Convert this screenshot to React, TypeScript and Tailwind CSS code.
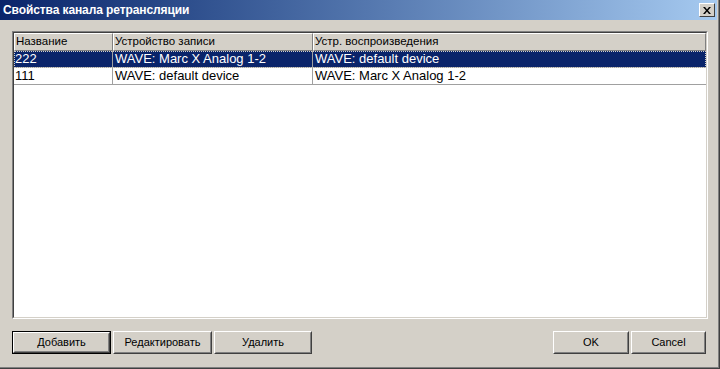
import React from 'react';

const rows = [
  { name: '222', rec: 'WAVE: Marc X Analog 1-2', play: 'WAVE: default device', selected: true },
  { name: '111', rec: 'WAVE: default device', play: 'WAVE: Marc X Analog 1-2', selected: false },
];

const Button = ({ label, width, primary }: { label: string; width: string; primary?: boolean }) => (
  <div className={`${width} h-[23px] ${primary ? 'border border-black' : ''}`}>
    <div className="h-full border border-t-white border-l-white border-r-[#404040] border-b-[#404040]">
      <div className="h-full border border-t-[#d4d0c8] border-l-[#d4d0c8] border-r-[#808080] border-b-[#808080] flex items-center justify-center text-[11px] text-black">
        {label}
      </div>
    </div>
  </div>
);

const HeaderCell = ({ label, width }: { label: string; width: string }) => (
  <div className={`${width} h-[18px] shrink-0 border border-t-white border-l-white border-r-[#808080] border-b-[#808080] flex items-center pl-[1px] text-[11.5px] text-black`}>
    {label}
  </div>
);

export default function App() {
  return (
    <div
      className="w-[720px] h-[369px] bg-[#d4d0c8] flex flex-col border-r border-b border-r-[#404040] border-b-[#404040]"
      style={{ fontFamily: '"Liberation Sans", Arial, sans-serif' }}
    >
      <div className="flex flex-col h-full border-r border-b border-r-[#808080] border-b-[#808080]">
        {/* Title bar */}
        <div className="h-[20px] mr-[1px] flex items-center justify-between pl-[3px] pr-[2px] bg-gradient-to-r from-[#0a246a] to-[#a6caf0]">
          <span className="text-white font-bold text-[12px] tracking-[-0.1px]">Свойства канала ретрансляции</span>
          <div className="w-[16px] h-[14px] bg-[#d4d0c8] border border-t-white border-l-white border-r-[#404040] border-b-[#404040] flex items-center justify-center">
            <svg width="8" height="7" viewBox="0 0 8 7">
              <path d="M0 0h2l2 2.5L6 0h2L5 3.5 8 7H6L4 4.5 2 7H0l3-3.5z" fill="#000" />
            </svg>
          </div>
        </div>

        {/* List view */}
        <div className="ml-[12px] mt-[11px] w-[696px] h-[288px] border border-t-[#808080] border-l-[#808080] border-r-white border-b-white">
          <div className="h-full border border-t-[#404040] border-l-[#404040] border-r-[#d4d0c8] border-b-[#d4d0c8] bg-white flex flex-col">
            <div className="flex bg-[#d4d0c8]">
              <HeaderCell label="Название" width="w-[99px]" />
              <HeaderCell label="Устройство записи" width="w-[200px]" />
              <HeaderCell label="Устр. воспроизведения" width="flex-1" />
            </div>
            {rows.map((r) => (
              <div
                key={r.name}
                className={`flex h-[17px] text-[13px] border-b border-[#a0a0a0] ${
                  r.selected ? 'bg-[#0a246a] text-white outline outline-1 outline-dotted outline-[#d4d0c8] -outline-offset-1' : 'text-black'
                }`}
              >
                <div className="w-[99px] shrink-0 pl-[1px] flex items-center border-r border-[#a0a0a0]">{r.name}</div>
                <div className="w-[200px] shrink-0 pl-[2px] flex items-center border-r border-[#a0a0a0]">{r.rec}</div>
                <div className="flex-1 pl-[2px] flex items-center">{r.play}</div>
              </div>
            ))}
          </div>
        </div>

        {/* Buttons */}
        <div className="flex mt-[12px] ml-[12px] mr-[12px]">
          <Button label="Добавить" width="w-[99px]" primary />
          <div className="ml-[2px]">
            <Button label="Редактировать" width="w-[99px]" />
          </div>
          <div className="ml-[2px]">
            <Button label="Удалить" width="w-[98px]" />
          </div>
          <div className="flex-1" />
          <Button label="OK" width="w-[76px]" />
          <div className="ml-[2px]">
            <Button label="Cancel" width="w-[75px]" />
          </div>
        </div>
      </div>
    </div>
  );
}
